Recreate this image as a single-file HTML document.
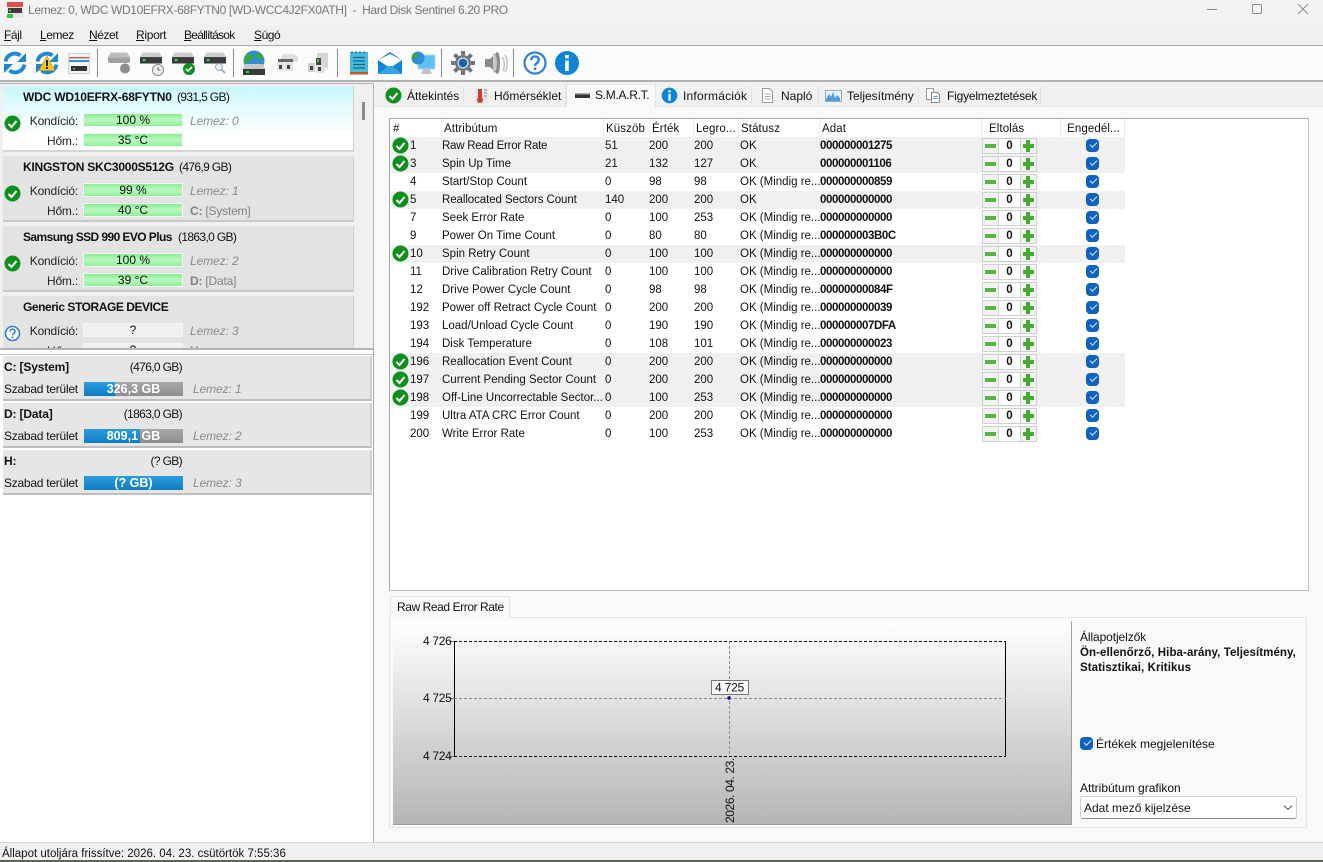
<!DOCTYPE html>
<html lang="hu"><head><meta charset="utf-8"><title>Hard Disk Sentinel</title>
<style>
*{box-sizing:border-box}
html,body{margin:0;padding:0}
body{width:1323px;height:862px;overflow:hidden;position:relative;background:#f0f0f0;font:12px/16px "Liberation Sans",sans-serif;color:#111}
div,span,svg{white-space:nowrap}
u{text-decoration:underline}
.m{position:absolute;top:27px;letter-spacing:-.45px}
.sep{position:absolute;top:49px;width:1px;height:28px;background:#8c8c8c}
.ti{position:absolute;width:26px;height:26px;top:50px}
.card{position:absolute;left:3px;width:351px;height:66px;background:#e3e3e3;border-bottom:2px solid #c8c8c8;border-right:1px solid #d0d0d0}
.card b{position:absolute;left:20px;top:3px;font-size:12px}
.card .sz{position:absolute;top:3px;letter-spacing:-.65px}
.l{position:absolute;text-align:right;left:0;width:75px;color:#222;letter-spacing:-.2px}
.bar{position:absolute;left:81px;width:98px;height:12px;background:linear-gradient(#86ee92,#bcf7c0 50%,#8cf098);text-align:center;line-height:12px;outline:1px solid #f5f5f5}
.g{position:absolute;left:187px;color:#8a8a8a;font-style:italic;letter-spacing:-.1px}
.d{position:absolute;left:187px;color:#808080;letter-spacing:-.2px}
.st{position:absolute;left:1px;width:17px;height:17px;top:29px}
.vol{position:absolute;left:3px;width:369px;height:45px;background:#e6e6e6;border-bottom:2px solid #bdbdbd;border-right:2px solid #cfcfcf}
.vol b{position:absolute;left:1px;top:3px;letter-spacing:-.15px}
.vol .s{position:absolute;top:3px;right:188px;letter-spacing:-.65px}
.vol .t{position:absolute;left:1px;top:25px;letter-spacing:-.25px}
.vb{position:absolute;left:81px;top:26px;width:99px;height:14px;background:linear-gradient(#a8a8a8,#8d8d8d);color:#fff;font-weight:bold;font-size:12.5px;line-height:14px;text-align:center;overflow:hidden}
.vb i{position:absolute;left:0;top:0;height:14px;background:linear-gradient(#2a9de0,#0f7cc0)}
.vb span{position:absolute;left:0;width:99px;top:0}
.vol .g{left:190px;top:25px}
.tab{position:absolute;top:86px;height:20px;background:#f0f0f0;border-right:1px solid #e2e2e2;line-height:19px;padding-left:0}
.tab span{position:absolute;top:1px}
.tab svg{position:absolute;top:1px;width:17px;height:17px}
.h{position:absolute;top:119px;height:18px;line-height:20px;border-left:1px solid #ececec;padding-left:2px;font-size:11.5px;letter-spacing:.1px}
.r{position:absolute;left:391px;width:734px;height:18px;line-height:17px;font-size:11.5px}
.r.s{background:#f0f0f0}
.r span{position:absolute;top:1px}
.r .n{left:19px}.r .at{left:51px}.r .k{left:214px}.r .e{left:258px}.r .lg{left:303px}.r .sx{left:349px}
.r b{position:absolute;left:429px;top:1px;font-size:11.5px;letter-spacing:-.4px}
.r svg.i{position:absolute;left:1px;top:0;width:17px;height:17px}
.r em{position:absolute;top:1px;height:16px;border:1px solid #cfcfcf;background:#f2f2f2;font-style:normal}
.r .mi{left:591px;width:17px}
.r .mi::after{content:"";position:absolute;left:2px;top:5px;width:11px;height:4px;background:#55b540}
.r .ze{left:607px;width:23px;text-align:center;font-weight:bold;line-height:15px;background:#fff}
.r .pl{left:629px;width:17px}
.r .pl::after{content:"";position:absolute;left:2px;top:5px;width:11px;height:4px;background:#45ab30}
.r .pl::before{content:"";position:absolute;left:5px;top:1px;width:4px;height:12px;background:#45ab30}
.cb{position:absolute;left:695px;top:2px;width:13px;height:13px;background:#0f62bf;border-radius:4px}
.cb::after{content:"";position:absolute;left:3.5px;top:3px;width:6px;height:3px;border-left:1px solid #dce9f8;border-bottom:1px solid #dce9f8;transform:rotate(-45deg)}
</style></head><body>
<svg width="0" height="0" style="position:absolute"><defs>
<symbol id="ok" viewBox="0 0 17 17"><circle cx="8.5" cy="8.5" r="8" fill="#0f8f1e"/><path d="M4.5 9l3 3 5-6" fill="none" stroke="#fff" stroke-width="2"/></symbol>
<symbol id="q" viewBox="0 0 17 17"><circle cx="8.5" cy="8.5" r="7" fill="#fff" stroke="#2f7fd8" stroke-width="1.6"/><path d="M6 6.5c0-3.2 5.2-3 5 0 0 2-2.5 1.8-2.5 4" fill="none" stroke="#2f7fd8" stroke-width="1.6"/><rect x="7.7" y="11.5" width="1.7" height="1.7" fill="#2f7fd8"/></symbol>
<symbol id="info" viewBox="0 0 26 26"><circle cx="13" cy="13" r="12" fill="#0f83d6"/><rect x="11.2" y="5" width="3.6" height="3.4" fill="#fff"/><rect x="11.2" y="10.5" width="3.6" height="10.5" fill="#fff"/></symbol>
<symbol id="help" viewBox="0 0 26 26"><circle cx="13" cy="13" r="10.5" fill="#fff" stroke="#2f80d8" stroke-width="2.2"/><path d="M9.2 10c0-4.8 7.8-4.6 7.6 0 0 3-3.8 2.8-3.8 6" fill="none" stroke="#2f80d8" stroke-width="2.4"/><rect x="11.7" y="17.5" width="2.6" height="2.6" fill="#2f80d8"/></symbol>
<symbol id="ref" viewBox="0 0 26 26"><path d="M3.500 11.500A9.500 9.500 0 0 1 18.500 5.500" fill="none" stroke="#1d87d8" stroke-width="3.800"/><path d="M24 3v9h-9z" fill="#1d87d8"/><path d="M22.500 14.500A9.500 9.500 0 0 1 7.500 20.500" fill="none" stroke="#1d87d8" stroke-width="3.800"/><path d="M2 23v-9h9z" fill="#1d87d8"/></symbol>
<symbol id="hdd" viewBox="0 0 24 12"><path d="M3 0h18l3 5H0z" fill="#cdcdcd"/><rect y="5" width="24" height="7" fill="#3a3a3a"/><rect x="3" y="7" width="3" height="2.500" fill="#3fd04f"/></symbol>
</defs></svg>

<!-- title -->
<div style="position:absolute;left:0;top:0;width:1323px;height:25px;background:#f3f3f3"></div>
<svg style="position:absolute;left:7px;top:2px" width="16" height="16" viewBox="0 0 16 16"><rect width="16" height="16" fill="#e9e4e2"/><path d="M0 0h16v5H0z" fill="#e05050"/><path d="M0 12h6v4H0z" fill="#33c24a"/><rect x="1" y="6" width="14" height="5" fill="#3c3c3c"/><rect x="2" y="7.500" width="2" height="2" fill="#3fd04f"/></svg>
<div style="position:absolute;left:28px;top:2px;color:#777;font-size:12px;letter-spacing:-.36px">Lemez: 0, WDC WD10EFRX-68FYTN0 [WD-WCC4J2FX0ATH] &nbsp;- &nbsp;Hard Disk Sentinel 6.20 PRO</div>
<svg style="position:absolute;left:1200px;top:0" width="123" height="20" fill="none" stroke="#8a8a8a"><path d="M7 9.500h10"/><rect x="52.500" y="4.500" width="9" height="9" rx="1"/><path d="M98 4l10 10M108 4l-10 10"/></svg>

<!-- menu -->
<div class="m" style="left:4px"><u>F</u>ájl</div>
<div class="m" style="left:40px"><u>L</u>emez</div>
<div class="m" style="left:89px"><u>N</u>ézet</div>
<div class="m" style="left:136px;letter-spacing:-.3px"><u>R</u>iport</div>
<div class="m" style="left:184px;letter-spacing:-.75px"><u>B</u>eállítások</div>
<div class="m" style="left:254px"><u>S</u>úgó</div>
<div style="position:absolute;left:0;top:45px;width:1323px;height:1px;background:#a8a8a8"></div>
<div style="position:absolute;left:0;top:46px;width:1323px;height:36px;background:#fbfbfb;border-bottom:2px solid #b0b0b0"></div>

<!-- toolbar -->
<svg class="ti" style="left:2px"><use href="#ref" width="26" height="26"/></svg>
<svg class="ti" style="left:34px"><use href="#ref" width="26" height="26"/><path d="M13 6l8 14.500H5z" fill="#f8c91c" stroke="#c79a10" stroke-width=".7"/><rect x="12" y="10" width="2" height="6" fill="#222"/><rect x="12" y="17" width="2" height="2" fill="#222"/></svg>
<svg class="ti" style="left:66px"><rect x="2.500" y="3.500" width="21" height="20" fill="#f4f4f4" stroke="#d0d0d0"/><rect x="3" y="7" width="20" height="1.500" fill="#d06060"/><rect x="3" y="10" width="20" height="2" fill="#2d8fe0"/><rect x="5" y="16" width="16" height="5" fill="#333"/><rect x="7" y="18" width="2" height="1.500" fill="#3fd04f"/></svg>
<div class="sep" style="left:97px"></div>
<svg class="ti" style="left:107px"><path d="M4 2.500h16l3 5v3c0 1.500-1 2.500-2.500 2.500h-17C2 13 1 12 1 10.500v-3z" fill="#a0a0a0"/><path d="M4 2.500h16l3 5H1z" fill="#bdbdbd"/><circle cx="18" cy="18.500" r="5" fill="#8d8d8d"/></svg>
<svg class="ti" style="left:139px"><use href="#hdd" x="1" y="2" width="22" height="12"/><circle cx="19" cy="20" r="5.500" fill="#eee" stroke="#8a8a8a"/><path d="M19 17v3h2.500" fill="none" stroke="#666"/></svg>
<svg class="ti" style="left:171px"><use href="#hdd" x="1" y="2" width="22" height="12"/><circle cx="18" cy="19" r="6" fill="#0f8f1e"/><path d="M15 19l2 2 4-4" fill="none" stroke="#fff" stroke-width="1.600"/></svg>
<svg class="ti" style="left:203px"><use href="#hdd" x="1" y="2" width="22" height="12"/><circle cx="16" cy="17" r="3.500" fill="#e8f3fb" stroke="#9ab"/><path d="M18.500 19.500l3.500 3.500" stroke="#999" stroke-width="1.500"/></svg>
<div class="sep" style="left:233px"></div>
<svg class="ti" style="left:241px"><circle cx="13" cy="11" r="10.500" fill="#2c8fd8"/><path d="M6 4c4-1 7 1 6 4s-5 3-7 7C2 11 3 6 6 4zM15 2c4 1 7 4 7 8-3 1-5-2-7-4z" fill="#3aa53a"/><path d="M4 14h18l2 5v1H2v-1z" fill="#c9c9c9"/><rect x="2" y="19" width="22" height="6" fill="#3a3a3a"/><rect x="5" y="21" width="3" height="2" fill="#3fd04f"/></svg>
<svg class="ti" style="left:274px"><path d="M9 4h11l4 3v5H7V8z" fill="#dedede"/><path d="M4 9h15v3H4z" fill="#666"/><rect x="3" y="12" width="7" height="9" fill="#e2e2e2"/><rect x="11" y="12" width="8" height="9" fill="#e2e2e2"/><rect x="5" y="15" width="3" height="4" fill="#444"/><rect x="13" y="15" width="3" height="4" fill="#444"/></svg>
<svg class="ti" style="left:305px"><rect x="12" y="3" width="11" height="15" fill="#d5d5d5"/><rect x="11" y="8" width="5" height="9" fill="#444"/><rect x="12" y="9" width="2" height="3" fill="#3fd04f"/><rect x="3" y="13" width="7" height="9" fill="#cfcfcf"/><rect x="11" y="15" width="9" height="8" fill="#e0e0e0"/><rect x="5" y="16" width="3" height="4" fill="#444"/><rect x="13" y="17" width="3" height="4" fill="#444"/></svg>
<div class="sep" style="left:337px"></div>
<svg class="ti" style="left:346px"><rect x="4" y="2" width="18" height="22" fill="#45bce0"/><rect x="4" y="22" width="18" height="2.500" fill="#b5622a"/><path d="M6 1.500v2M10 1.500v2M14 1.500v2M18 1.500v2" stroke="#2a5f7a" stroke-width="1.400"/><path d="M7 7.500h12M7 11h12M7 14.500h12M7 18h12" stroke="#1d5f80" stroke-width="1.200"/></svg>
<svg class="ti" style="left:377px"><path d="M1 10L13 2l12 8v14H1z" fill="#0f85d8"/><path d="M1 10l12 8 12-8-12-6z" fill="#fff"/><path d="M1 24l10-8h4l10 8z" fill="#35a5ea"/></svg>
<svg class="ti" style="left:410px"><rect x="8" y="5" width="17" height="14" fill="#5cc0f0" stroke="#b8d8ea"/><path d="M13 19h7l2 5H11z" fill="#b9c4cc"/><circle cx="8" cy="8" r="6.500" fill="#2c8fd8"/><path d="M4 4c3-1 5 1 4 3s-4 2-5 4c-1-3-1-5 1-7z" fill="#3aa53a"/></svg>
<div class="sep" style="left:441px"></div>
<svg class="ti" style="left:450px"><circle cx="13" cy="13" r="8" fill="#6c7680"/><path d="M13 1v4M13 21v4M1 13h4M21 13h4M4.500 4.500l3 3M18.500 18.500l3 3M21.500 4.500l-3 3M7.500 18.500l-3 3" stroke="#6c7680" stroke-width="4"/><circle cx="13" cy="13" r="5.500" fill="#dfe4ea"/><circle cx="13" cy="13" r="4.300" fill="#1b5fb0"/></svg>
<svg class="ti" style="left:482px"><path d="M3 9h5l7-7c2 0 3 5 3 11s-1 11-3 11l-7-7H3z" fill="#8a8a8a"/><path d="M11 3c3 1 4 6 4 10s-1 9-4 10" fill="#c9c9c9"/><path d="M20 7c3 4 3 9 1 14M23 5c3 5 3 12 0 17" fill="none" stroke="#c2c2c2" stroke-width="1.500"/></svg>
<div class="sep" style="left:513px"></div>
<svg class="ti" style="left:522px"><use href="#help" width="26" height="26"/></svg>
<svg class="ti" style="left:554px"><use href="#info" width="26" height="26"/></svg>

<!-- backgrounds of the lower area -->
<div style="position:absolute;left:0;top:349px;width:374px;height:493px;background:#fff;border-right:1px solid #a8a8a8"></div>

<!-- left disks panel -->
<div style="position:absolute;left:0;top:83px;width:374px;height:267px;border:solid #b4b4b4;border-width:1px 1px 2px 0;background:#f0f0f0;overflow:hidden">
<div style="position:absolute;left:362px;top:18px;width:3px;height:18px;background:#8a8a8a"></div>
<div class="card" style="top:2px;background:linear-gradient(#c9f8fb,#fff 75%);border-bottom-color:#d5d5d5">
<b style="letter-spacing:-.2px">WDC WD10EFRX-68FYTN0</b><span class="sz" style="left:174px">(931,5 GB)</span>
<svg class="st"><use href="#ok" width="17" height="17"/></svg>
<span class="l" style="top:27px">Kondíció:</span><div class="bar" style="top:28px">100 %</div><i class="g" style="top:27px">Lemez: 0</i>
<span class="l" style="top:47px">Hőm.:</span><div class="bar" style="top:48px">35 °C</div></div>
<div class="card" style="top:72px">
<b style="letter-spacing:-.24px">KINGSTON SKC3000S512G</b><span class="sz" style="left:176px">(476,9 GB)</span>
<svg class="st"><use href="#ok" width="17" height="17"/></svg>
<span class="l" style="top:27px">Kondíció:</span><div class="bar" style="top:28px">99 %</div><i class="g" style="top:27px">Lemez: 1</i>
<span class="l" style="top:47px">Hőm.:</span><div class="bar" style="top:48px">40 °C</div><span class="d" style="top:47px"><b style="position:static;font-size:12px">C:</b> [System]</span></div>
<div class="card" style="top:142px">
<b style="letter-spacing:-.58px">Samsung SSD 990 EVO Plus</b><span class="sz" style="left:175px">(1863,0 GB)</span>
<svg class="st"><use href="#ok" width="17" height="17"/></svg>
<span class="l" style="top:27px">Kondíció:</span><div class="bar" style="top:28px">100 %</div><i class="g" style="top:27px">Lemez: 2</i>
<span class="l" style="top:47px">Hőm.:</span><div class="bar" style="top:48px">39 °C</div><span class="d" style="top:47px"><b style="position:static;font-size:12px">D:</b> [Data]</span></div>
<div class="card" style="top:212px">
<b style="letter-spacing:-.45px">Generic STORAGE DEVICE</b>
<svg class="st"><use href="#q" width="17" height="17"/></svg>
<span class="l" style="top:27px">Kondíció:</span><div class="bar" style="top:28px;background:#f0f0f0">?</div><i class="g" style="top:27px">Lemez: 3</i>
<span class="l" style="top:47px">Hőm.:</span><div class="bar" style="top:48px;background:#f0f0f0">?</div><span class="d" style="top:47px"><b style="position:static;font-size:12px">H:</b></span></div>
</div>

<!-- volumes -->
<div style="position:absolute;left:0;top:354px;width:373px;height:142px;border-top:1px solid #c0c0c0"></div>
<div class="vol" style="top:356px"><b>C: [System]</b><span class="s">(476,0 GB)</span><span class="t">Szabad terület</span><div class="vb"><i style="width:31px"></i><span>326,3 GB</span></div><i class="g">Lemez: 1</i></div>
<div class="vol" style="top:403px"><b>D: [Data]</b><span class="s">(1863,0 GB)</span><span class="t">Szabad terület</span><div class="vb"><i style="width:56px"></i><span>809,1 GB</span></div><i class="g">Lemez: 2</i></div>
<div class="vol" style="top:450px"><b>H:</b><span class="s">(? GB)</span><span class="t">Szabad terület</span><div class="vb"><i style="width:99px"></i><span>(? GB)</span></div><i class="g">Lemez: 3</i></div>

<!-- right -->
<div style="position:absolute;left:374px;top:106px;width:949px;height:736px;background:#f9f9f9;border-top:1px solid #e4e4e4"></div>
<div class="tab" style="left:381px;width:83px"><svg style="left:4px"><use href="#ok" width="17" height="17"/></svg><span style="left:26px;letter-spacing:-.05px">Áttekintés</span></div>
<div class="tab" style="left:465px;width:101px"><svg style="left:8px" viewBox="0 0 17 17"><rect x="2" y="1" width="13" height="15" fill="#e8e8e8"/><rect x="5" y="2" width="4" height="10" fill="#c94030"/><circle cx="7" cy="13" r="3" fill="#c94030"/><path d="M11 3h3M11 6h3M11 9h3" stroke="#888"/></svg><span style="left:29px">Hőmérséklet</span></div>
<div class="tab" style="left:566px;width:90px;top:84px;height:23px;background:#f9f9f9;border:1px solid #e4e4e4;border-bottom:0"><svg style="left:7px;top:3px" viewBox="0 0 17 17"><rect x="1" y="6" width="15" height="4" fill="#333"/><rect x="1" y="5" width="15" height="1.500" fill="#aaa"/></svg><span style="left:28px;top:1px;letter-spacing:-.3px">S.M.A.R.T.</span></div>
<div class="tab" style="left:656px;width:96px"><svg style="left:5px"><use href="#info" width="17" height="17"/></svg><span style="left:27px;letter-spacing:.2px">Információk</span></div>
<div class="tab" style="left:753px;width:66px"><svg style="left:6px" viewBox="0 0 17 17"><path d="M3.500 1.500h7l3 3v11h-10z" fill="#fff" stroke="#999"/><path d="M5.500 7h6M5.500 9.500h6M5.500 12h6" stroke="#aaa"/></svg><span style="left:28px">Napló</span></div>
<div class="tab" style="left:820px;width:99px"><svg style="left:5px" viewBox="0 0 17 17"><rect x=".5" y="3.500" width="16" height="11" fill="#e8f1fb" stroke="#9ab"/><path d="M1 12l3-5 2 3 2-5 2 6 2-3 3 3v3H1z" fill="#4a9be0"/></svg><span style="left:27px">Teljesítmény</span></div>
<div class="tab" style="left:920px;width:121px"><svg style="left:5px" viewBox="0 0 17 17"><path d="M1.500 1.500h7v11h-7z" fill="#fff" stroke="#999"/><path d="M6.500 5.500h6l2 2v8h-8z" fill="#fff" stroke="#889"/><path d="M8.500 9.500h4M8.500 11.500h4" stroke="#69b"/></svg><span style="left:27px;letter-spacing:-.2px">Figyelmeztetések</span></div>

<!-- table -->
<div style="position:absolute;left:389px;top:118px;width:920px;height:473px;background:#fff;border:1px solid #a6a6a6;border-color:#a6a6a6 #bdbdbd #bdbdbd #a6a6a6"></div>
<div class="h" style="left:393px;border:0;padding:0">#</div>
<div class="h" style="left:441px">Attribútum</div>
<div class="h" style="left:603px">Küszöb</div>
<div class="h" style="left:649px">Érték</div>
<div class="h" style="left:693px">Legro...</div>
<div class="h" style="left:738px">Státusz</div>
<div class="h" style="left:819px">Adat</div>
<div class="h" style="left:981px;width:79px;padding-left:7px">Eltolás</div>
<div class="h" style="left:1060px;width:65px;text-align:center;border-right:1px solid #ececec">Engedél...</div>

<div class="r s" style="top:137px"><svg class="i"><use href="#ok" width="17" height="17"/></svg><span class="n">1</span><span class="at" style="letter-spacing:-.25px">Raw Read Error Rate</span><span class="k">51</span><span class="e">200</span><span class="lg">200</span><span class="sx">OK</span><b>000000001275</b><em class="mi"></em><em class="ze">0</em><em class="pl"></em><i class="cb"></i></div>
<div class="r s" style="top:155px"><svg class="i"><use href="#ok" width="17" height="17"/></svg><span class="n">3</span><span class="at">Spin Up Time</span><span class="k">21</span><span class="e">132</span><span class="lg">127</span><span class="sx">OK</span><b>000000001106</b><em class="mi"></em><em class="ze">0</em><em class="pl"></em><i class="cb"></i></div>
<div class="r" style="top:173px"><span class="n">4</span><span class="at">Start/Stop Count</span><span class="k">0</span><span class="e">98</span><span class="lg">98</span><span class="sx">OK (Mindig re...</span><b>000000000859</b><em class="mi"></em><em class="ze">0</em><em class="pl"></em><i class="cb"></i></div>
<div class="r s" style="top:191px"><svg class="i"><use href="#ok" width="17" height="17"/></svg><span class="n">5</span><span class="at" style="letter-spacing:-.08px">Reallocated Sectors Count</span><span class="k">140</span><span class="e">200</span><span class="lg">200</span><span class="sx">OK</span><b>000000000000</b><em class="mi"></em><em class="ze">0</em><em class="pl"></em><i class="cb"></i></div>
<div class="r" style="top:209px"><span class="n">7</span><span class="at">Seek Error Rate</span><span class="k">0</span><span class="e">100</span><span class="lg">253</span><span class="sx">OK (Mindig re...</span><b>000000000000</b><em class="mi"></em><em class="ze">0</em><em class="pl"></em><i class="cb"></i></div>
<div class="r" style="top:227px"><span class="n">9</span><span class="at">Power On Time Count</span><span class="k">0</span><span class="e">80</span><span class="lg">80</span><span class="sx">OK (Mindig re...</span><b>000000003B0C</b><em class="mi"></em><em class="ze">0</em><em class="pl"></em><i class="cb"></i></div>
<div class="r s" style="top:245px"><svg class="i"><use href="#ok" width="17" height="17"/></svg><span class="n">10</span><span class="at">Spin Retry Count</span><span class="k">0</span><span class="e">100</span><span class="lg">100</span><span class="sx">OK (Mindig re...</span><b>000000000000</b><em class="mi"></em><em class="ze">0</em><em class="pl"></em><i class="cb"></i></div>
<div class="r" style="top:263px"><span class="n">11</span><span class="at">Drive Calibration Retry Count</span><span class="k">0</span><span class="e">100</span><span class="lg">100</span><span class="sx">OK (Mindig re...</span><b>000000000000</b><em class="mi"></em><em class="ze">0</em><em class="pl"></em><i class="cb"></i></div>
<div class="r" style="top:281px"><span class="n">12</span><span class="at">Drive Power Cycle Count</span><span class="k">0</span><span class="e">98</span><span class="lg">98</span><span class="sx">OK (Mindig re...</span><b>00000000084F</b><em class="mi"></em><em class="ze">0</em><em class="pl"></em><i class="cb"></i></div>
<div class="r" style="top:299px"><span class="n">192</span><span class="at">Power off Retract Cycle Count</span><span class="k">0</span><span class="e">200</span><span class="lg">200</span><span class="sx">OK (Mindig re...</span><b>000000000039</b><em class="mi"></em><em class="ze">0</em><em class="pl"></em><i class="cb"></i></div>
<div class="r" style="top:317px"><span class="n">193</span><span class="at">Load/Unload Cycle Count</span><span class="k">0</span><span class="e">190</span><span class="lg">190</span><span class="sx">OK (Mindig re...</span><b>000000007DFA</b><em class="mi"></em><em class="ze">0</em><em class="pl"></em><i class="cb"></i></div>
<div class="r" style="top:335px"><span class="n">194</span><span class="at">Disk Temperature</span><span class="k">0</span><span class="e">108</span><span class="lg">101</span><span class="sx">OK (Mindig re...</span><b>000000000023</b><em class="mi"></em><em class="ze">0</em><em class="pl"></em><i class="cb"></i></div>
<div class="r s" style="top:353px"><svg class="i"><use href="#ok" width="17" height="17"/></svg><span class="n">196</span><span class="at">Reallocation Event Count</span><span class="k">0</span><span class="e">200</span><span class="lg">200</span><span class="sx">OK (Mindig re...</span><b>000000000000</b><em class="mi"></em><em class="ze">0</em><em class="pl"></em><i class="cb"></i></div>
<div class="r s" style="top:371px"><svg class="i"><use href="#ok" width="17" height="17"/></svg><span class="n">197</span><span class="at">Current Pending Sector Count</span><span class="k">0</span><span class="e">200</span><span class="lg">200</span><span class="sx">OK (Mindig re...</span><b>000000000000</b><em class="mi"></em><em class="ze">0</em><em class="pl"></em><i class="cb"></i></div>
<div class="r s" style="top:389px"><svg class="i"><use href="#ok" width="17" height="17"/></svg><span class="n">198</span><span class="at">Off-Line Uncorrectable Sector...</span><span class="k">0</span><span class="e">100</span><span class="lg">253</span><span class="sx">OK (Mindig re...</span><b>000000000000</b><em class="mi"></em><em class="ze">0</em><em class="pl"></em><i class="cb"></i></div>
<div class="r" style="top:407px"><span class="n">199</span><span class="at">Ultra ATA CRC Error Count</span><span class="k">0</span><span class="e">200</span><span class="lg">200</span><span class="sx">OK (Mindig re...</span><b>000000000000</b><em class="mi"></em><em class="ze">0</em><em class="pl"></em><i class="cb"></i></div>
<div class="r" style="top:425px"><span class="n">200</span><span class="at">Write Error Rate</span><span class="k">0</span><span class="e">100</span><span class="lg">253</span><span class="sx">OK (Mindig re...</span><b>000000000000</b><em class="mi"></em><em class="ze">0</em><em class="pl"></em><i class="cb"></i></div>

<!-- bottom panel -->
<div style="position:absolute;left:389px;top:617px;width:918px;height:211px;border:1px solid #e4e4e4;background:#f9f9f9"></div>
<div style="position:absolute;left:390px;top:596px;width:120px;height:22px;background:#f9f9f9;border:1px solid #e4e4e4;border-bottom:0;padding:2px 0 0 6px;letter-spacing:-.42px">Raw Read Error Rate</div>
<svg style="position:absolute;left:393px;top:621px" width="680" height="205" font-family="Liberation Sans" font-size="12" fill="#111">
<defs><linearGradient id="gr" x1="0" y1="0" x2="0" y2="1"><stop offset="0" stop-color="#fff"/><stop offset="1" stop-color="#b5b5b5"/></linearGradient></defs>
<rect width="679" height="204" fill="url(#gr)"/>
<path d="M0 203.500h679M678.500 0v204" stroke="#a0a0a0" fill="none"/>
<path d="M61.500 20.500v115M612.500 20.500v115" stroke="#000" fill="none"/>
<path d="M61 20.500h552M61 135.500h552" stroke="#000" stroke-dasharray="3 2" fill="none"/>
<path d="M61 77.500h552M336.500 20v115" stroke="#8c8c8c" stroke-dasharray="3 2" fill="none"/>
<path d="M56 20.500h5M56 77.500h5M56 135.500h5" stroke="#777"/>
<text x="30" y="24" letter-spacing="-.3">4 726</text><text x="30" y="81" letter-spacing="-.3">4 725</text><text x="30" y="139" letter-spacing="-.3">4 724</text>
<rect x="318.500" y="59.500" width="37" height="14" fill="#fff" fill-opacity=".7" stroke="#000" stroke-dasharray="1 1"/>
<text x="322" y="70.500" letter-spacing="-.2">4 725</text>
<circle cx="336" cy="77" r="1.700" fill="#0000a0"/>
<text transform="translate(341 202) rotate(-90)" letter-spacing="-.4">2026. 04. 23.</text>
</svg>
<div style="position:absolute;left:1080px;top:629px;letter-spacing:-.1px">Állapotjelzők</div>
<div style="position:absolute;left:1080px;top:646px;font-weight:bold;line-height:15px;font-size:11.5px;letter-spacing:.08px">Ön-ellenőrző, Hiba-arány, Teljesítmény,<br>Statisztikai, Kritikus</div>
<i class="cb" style="left:1080px;top:737px"></i>
<div style="position:absolute;left:1096px;top:736px">Értékek megjelenítése</div>
<div style="position:absolute;left:1080px;top:780px">Attribútum grafikon</div>
<div style="position:absolute;left:1080px;top:796px;width:217px;height:23px;background:#fff;border:1px solid #cfcfcf;border-bottom-color:#8a8a8a;border-radius:3px;padding:3px 0 0 3px">Adat mező kijelzése<svg style="position:absolute;left:202px;top:8px" width="10" height="6" fill="none" stroke="#555"><path d="M1 .5l4 4 4-4"/></svg></div>

<!-- status -->
<div style="position:absolute;left:0;top:842px;width:1323px;height:18px;background:#f0f0f0;border-top:1px solid #d5d5d5;padding:3px 0 0 2px;font-size:11.5px">Állapot utoljára frissítve: 2026. 04. 23. csütörtök 7:55:36</div>
<div style="position:absolute;left:0;top:860px;width:1323px;height:2px;background:#5c6650"></div>
</body></html>
